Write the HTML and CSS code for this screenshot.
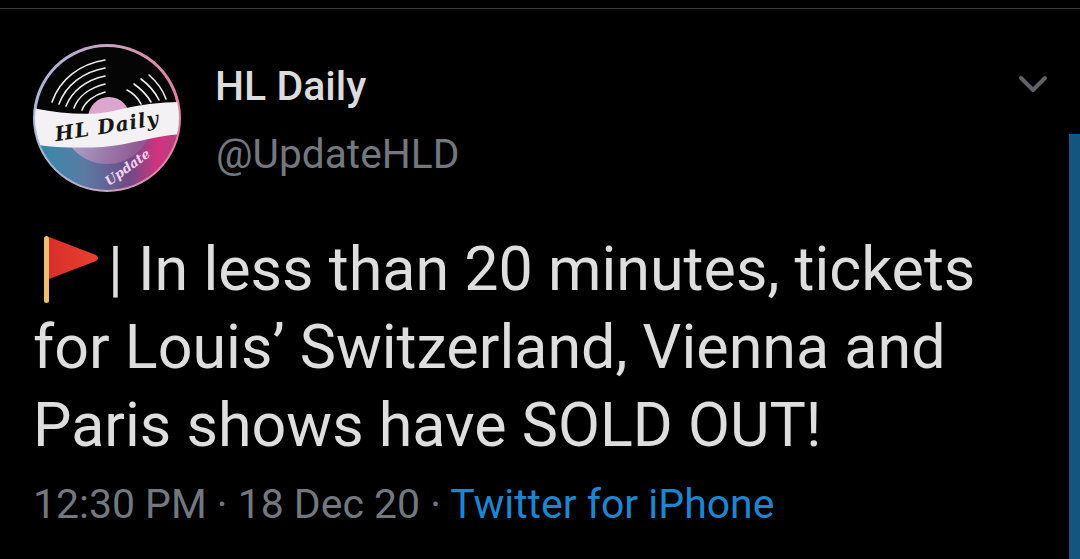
FILE: index.html
```html
<!DOCTYPE html>
<html lang="en">
<head>
<meta charset="utf-8">
<title>HL Daily tweet</title>
<link rel="stylesheet" href="styles.css">
</head>
<body>
<div class="topline"></div>
<div class="scrollbar"></div>
<article class="tweet">
  <header class="head">
    <svg class="avatar" viewBox="0 0 148 148" width="148" height="148">
      <defs>
        <linearGradient id="rim" x1="0" y1="0" x2="1" y2="0">
          <stop offset="0" stop-color="#a9b8dc"/>
          <stop offset="0.5" stop-color="#c9a3bf"/>
          <stop offset="1" stop-color="#e77fa6"/>
        </linearGradient>
        <linearGradient id="low" x1="0" y1="0" x2="1" y2="0">
          <stop offset="0" stop-color="#2f8cab"/>
          <stop offset="0.35" stop-color="#5a7ba3"/>
          <stop offset="0.65" stop-color="#6f4a86"/>
          <stop offset="0.85" stop-color="#d5327f"/>
          <stop offset="1" stop-color="#a8487f"/>
        </linearGradient>
        <linearGradient id="halo" x1="0" y1="0" x2="1" y2="0.3">
          <stop offset="0" stop-color="#b5c3df"/>
          <stop offset="1" stop-color="#8f5a93"/>
        </linearGradient>
        <clipPath id="disc"><circle cx="74" cy="74" r="72"/></clipPath>
        <clipPath id="lower"><rect x="0" y="85" width="148" height="63"/></clipPath>
      </defs>
      <circle cx="74" cy="74" r="74" fill="url(#rim)"/>
      <circle cx="74" cy="74" r="71" fill="#050505"/>
      <g clip-path="url(#disc)">
        <path d="M0 85 H148 V148 H0 Z" fill="url(#low)"/>
        <circle cx="74" cy="74" r="46" fill="url(#halo)" clip-path="url(#lower)"/>
        <circle cx="76" cy="74" r="21" fill="#dca6cf"/>
        <path d="M0 64 C30 70 58 72 80 67 C108 60 130 58 148 58 V90 C120 92 100 100 70 103 C50 104 20 104 0 100 Z" fill="#f4f1f4"/>
      </g>
      <g fill="none" stroke="#ececec" stroke-width="1.6" stroke-linecap="round">
        <path d="M19 58 C27 35 47 20 72 16"/>
        <path d="M26 60 C33 41 50 28 72 24"/>
        <path d="M33 62 C39 47 53 36 72 32"/>
        <path d="M41 64 C45 53 56 44 72 40"/>
        <path d="M49 66 C52 58 61 51 72 48"/>
        <path d="M116 31 C124 38 130 46 133 55"/>
        <path d="M108 35 C116 41 122 48 126 56"/>
        <path d="M101 40 C108 45 114 51 118 58"/>
        <path d="M94 46 C100 49 105 54 108 60"/>
      </g>
      <text class="logo-main" x="75" y="89" text-anchor="middle" transform="rotate(-9 75 89)">HL Daily</text>
      <text class="logo-sub" x="97" y="127" text-anchor="middle" transform="rotate(-36 97 127)">Update</text>
    </svg>
    <div class="names">
      <div class="name">HL Daily</div>
      <div class="handle">@UpdateHLD</div>
    </div>
    <svg class="chevron" viewBox="0 0 30 20" width="30" height="20">
      <path d="M3 3 L15 15 L27 3" fill="none" stroke="#5f6266" stroke-width="4" stroke-linecap="round" stroke-linejoin="round"/>
    </svg>
  </header>
  <p class="body"><svg class="flag" viewBox="0 0 56 68" width="56" height="68"><defs><linearGradient id="flagfill" x1="0" y1="0" x2="1" y2="0"><stop offset="0" stop-color="#d92f2b"/><stop offset="1" stop-color="#e8402f"/></linearGradient></defs><rect x="0" y="0" width="5" height="67" rx="2.5" fill="#eebf73"/><path d="M5 1 L52 19 Q56 22 52 25 L5 43 Z" fill="url(#flagfill)"/></svg>| In less than 20 minutes, tickets<br>for Louis’ Switzerland, Vienna and<br>Paris shows have SOLD OUT!</p>
  <footer class="meta">12:30 PM · 18 Dec 20 · <span class="source">Twitter for iPhone</span></footer>
</article>
</body>
</html>
```
FILE: styles.css
```css
html, body {
  margin: 0;
  height: 100%;
  background: #000;
  overflow: hidden;
}
body {
  position: relative;
  font-family: Roboto, "Liberation Sans", sans-serif;
}
.topline {
  height: 1px;
  margin-top: 8px;
  background: #3a3a3c;
}
.scrollbar {
  position: absolute;
  right: 0;
  top: 134px;
  bottom: 0;
  width: 11px;
  background: #14557f;
}
.tweet {
  padding: 35px 0 0 33px;
}
.head {
  display: flex;
  align-items: flex-start;
}
.avatar {
  flex: none;
}
.names {
  margin-left: 35px;
  margin-top: 17px;
}
.name {
  margin-left: -1px;
  font-size: 41px;
  line-height: 50px;
  font-weight: 500;
  color: #dcdcdc;
}
.handle {
  margin-top: 18px;
  font-size: 40.7px;
  line-height: 50px;
  color: #73787e;
}
.chevron {
  margin-left: auto;
  margin-right: 32px;
  margin-top: 31px;
  flex: none;
}
.logo-main {
  font-family: "DejaVu Serif", serif;
  font-style: italic;
  font-weight: 700;
  font-size: 20px;
  letter-spacing: 1px;
  fill: #161616;
}
.logo-sub {
  font-family: "DejaVu Serif", serif;
  font-style: italic;
  font-weight: 700;
  font-size: 13px;
  fill: #f3d4ee;
}
.body {
  margin: 38px 0 0;
  font-size: 61px;
  line-height: 78px;
  color: #dedede;
}
.flag {
  vertical-align: -14px;
  margin-right: 8px;
  margin-left: 11px;
}
.meta {
  margin: 15px 0 0;
  font-size: 40.95px;
  line-height: 50px;
  color: #73787e;
}
.source {
  color: #1c86d0;
}
```
